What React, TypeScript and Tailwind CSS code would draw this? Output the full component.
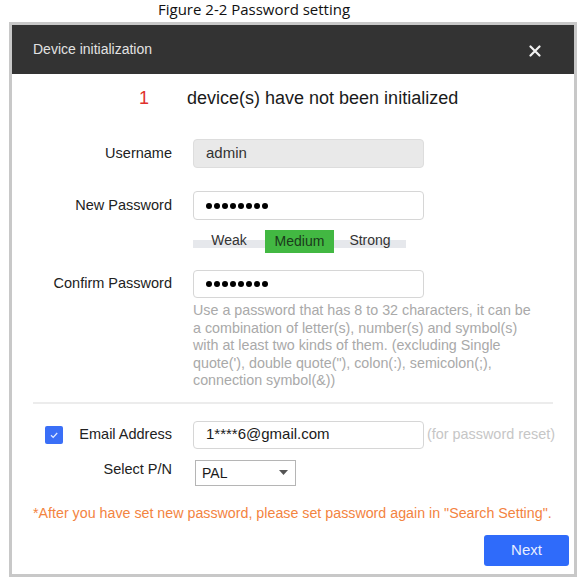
export default function App() {
  const font = { fontFamily: '"Liberation Sans", Arial, sans-serif' };
  const dots = Array.from({ length: 8 });

  return (
    <div className="h-[582px] w-[587px] overflow-hidden bg-white text-[#222]" style={font}>
      <p
        className="pl-[158px] text-[15px] leading-[18px] text-[#111]"
        style={{ fontFamily: '"Open Sans", "Noto Sans", sans-serif' }}
      >
        Figure 2-2 Password setting
      </p>

      <div className="ml-[9px] mt-[4px] flex h-[555px] w-[568px] flex-col border-[3px] border-[#c8c8c8] bg-white">
        {/* title bar */}
        <div className="flex h-[49px] items-center justify-between bg-[#333333] pl-[21px] pr-[33px]">
          <span className="text-[14px] text-[#e2e2e2]">Device initialization</span>
          <svg width="12" height="12" viewBox="0 0 12 12" className="mt-[3px]">
            <path d="M1.5 1.5l9 9M10.5 1.5l-9 9" stroke="#f2f2f2" strokeWidth="2.2" strokeLinecap="round" />
          </svg>
        </div>

        {/* headline */}
        <div className="mt-[12px] flex pl-[127px] text-[18px] leading-[24px]">
          <span className="w-[48px] text-[#e0302c]">1</span>
          <span className="text-[#1a1a1a]">device(s) have not been initialized</span>
        </div>

        {/* username */}
        <div className="mt-[29px] flex items-center">
          <span className="w-[160px] text-right text-[14.5px]">Username</span>
          <div className="ml-[21px] flex h-[29px] w-[231px] items-center rounded-[4px] border border-[#dddddd] bg-[#e9e9e9] pl-[12px] text-[15px] text-[#333]">
            admin
          </div>
        </div>

        {/* new password */}
        <div className="mt-[23px] flex items-center">
          <span className="w-[160px] text-right text-[14.5px]">New Password</span>
          <div className="ml-[21px] flex h-[29px] w-[231px] items-center gap-[2px] rounded-[4px] border border-[#d6d6d6] bg-white pl-[12px]">
            {dots.map((_, i) => (
              <span key={i} className="h-[6px] w-[6px] rounded-full bg-black" />
            ))}
          </div>
        </div>

        {/* strength */}
        <div className="ml-[181px] mt-[10px] flex h-[23px] w-[213px] text-[14px]">
          <span className="flex w-[72px] justify-center bg-[linear-gradient(to_bottom,transparent_10px,#e6e8ec_10px,#e6e8ec_18px,transparent_18px)] pt-[2px] leading-[16px] text-[#333]">
            Weak
          </span>
          <span className="flex w-[69px] items-center justify-center bg-[#42b842] text-[#1b3a1b]">Medium</span>
          <span className="flex w-[72px] justify-center bg-[linear-gradient(to_bottom,transparent_10px,#e6e8ec_10px,#e6e8ec_18px,transparent_18px)] pt-[2px] leading-[16px] text-[#333]">
            Strong
          </span>
        </div>

        {/* confirm password */}
        <div className="mt-[17px] flex items-center">
          <span className="w-[160px] text-right text-[14.5px]">Confirm Password</span>
          <div className="ml-[21px] flex h-[28px] w-[231px] items-center gap-[2px] rounded-[4px] border border-[#d6d6d6] bg-white pl-[12px]">
            {dots.map((_, i) => (
              <span key={i} className="h-[6px] w-[6px] rounded-full bg-black" />
            ))}
          </div>
        </div>

        <p className="ml-[181px] mt-[4px] whitespace-nowrap text-[14.3px] leading-[17.5px] text-[#a9a9a9]">
          Use a password that has 8 to 32 characters, it can be
          <br />
          a combination of letter(s), number(s) and symbol(s)
          <br />
          with at least two kinds of them. (excluding Single
          <br />
          quote('), double quote("), colon(:), semicolon(;),
          <br />
          connection symbol(&amp;))
        </p>

        <div className="mx-[21px] mt-[12px] h-[2px] bg-[#ececec]" />

        {/* email */}
        <div className="mt-[17px] flex items-center">
          <div className="flex w-[160px] items-center justify-between pl-[33px]">
            <span className="flex h-[18px] w-[18px] items-center justify-center rounded-[2px] bg-[#3a6ff7]">
              <svg width="12" height="12" viewBox="0 0 12 12">
                <path d="M3 6.2l2.2 2.2L9.2 4" fill="none" stroke="#dfe8ff" strokeWidth="1.3" />
              </svg>
            </span>
            <span className="text-[14.5px]">Email Address</span>
          </div>
          <div className="ml-[21px] flex h-[28px] w-[231px] items-center rounded-[4px] border border-[#d6d6d6] bg-white pl-[12px] text-[15px] text-[#1a1a1a]">
            1****6@gmail.com
          </div>
          <span className="ml-[3px] text-[14.4px] text-[#c6c6c6]">(for password reset)</span>
        </div>

        {/* select */}
        <div className="mt-[11px] flex items-start">
          <span className="w-[160px] text-right text-[14.5px] leading-[18px]">Select P/N</span>
          <div className="ml-[23px] flex h-[26px] w-[101px] items-center justify-between border border-[#b5b5b5] bg-white pl-[6px] pr-[7px] text-[14px] text-[#1a1a1a]">
            <span className="pt-[2px]">PAL</span>
            <svg width="9" height="5" viewBox="0 0 9 5">
              <path d="M0 0h9L4.5 5z" fill="#555" />
            </svg>
          </div>
        </div>

        <p className="mt-[18px] whitespace-nowrap pl-[21px] text-[14.25px] leading-[18px] text-[#f3843f]">
          *After you have set new password, please set password again in "Search Setting".
        </p>

        <div className="mt-[13px] flex justify-end pr-[5px]">
          <button className="h-[31px] w-[85px] rounded-[3px] bg-[#2f6bfa] text-[15px] text-[#e8eeff]">Next</button>
        </div>
      </div>
    </div>
  );
}
